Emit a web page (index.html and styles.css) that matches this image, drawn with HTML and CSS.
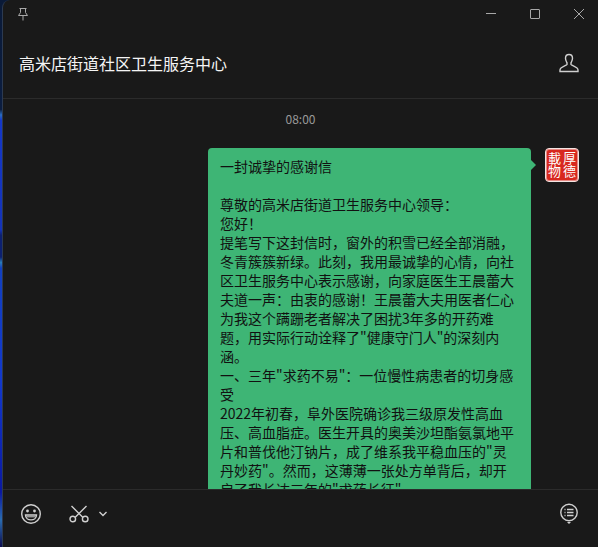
FILE: index.html
```html
<!DOCTYPE html>
<html lang="zh-CN">
<head>
  <meta charset="UTF-8" />
  <meta name="viewport" content="width=device-width, initial-scale=1.0"/>
  <title>高米店街道社区卫生服务中心</title>
  <link rel="stylesheet" href="styles.css">
</head>
<body>
  <div class="window">
    <div class="titlebar">
      <button class="pin-btn" aria-label="置顶">
        <svg width="12" height="14" viewBox="0 0 12 14"><path d="M2.5 1.5h7M3.5 1.5v4L1.500 8.500h9L8.500 5.500v-4M6 8.500V13.500"/></svg>
      </button>
      <div class="window-controls">
        <button aria-label="最小化">
          <svg width="12" height="12" viewBox="0 0 12 12"><path d="M1 5.5h10"/></svg>
        </button>
        <button aria-label="最大化">
          <svg width="12" height="12" viewBox="0 0 12 12"><rect x="1.5" y="1.5" width="9" height="9" rx="0.5"/></svg>
        </button>
        <button aria-label="关闭">
          <svg width="12" height="12" viewBox="0 0 12 12"><path d="M1 1l10 10M11 1L1 11"/></svg>
        </button>
      </div>
    </div>

    <header class="chat-header">
      <h1>高米店街道社区卫生服务中心</h1>
      <button aria-label="聊天信息">
        <svg width="20" height="20" viewBox="0 0 20 20"><path d="M10 1.500C7.800 1.500 6.500 3 6.500 5.200C6.500 7.500 7.300 8.500 8 9.700V11.500C7.500 12.800 1 13.800 1 17V18.500H19V17C19 13.800 12.500 12.800 12 11.500V9.700C12.700 8.500 13.500 7.500 13.500 5.200C13.500 3 12.200 1.500 10 1.500Z"/></svg>
      </button>
    </header>

    <main class="messages">
      <time class="time">08:00</time>
      <div class="message">
        <div class="bubble">
          <p>一封诚挚的感谢信</p>
          <br>
          <p>尊敬的高米店街道卫生服务中心领导：</p>
          <p>您好！</p>
          <p>提笔写下这封信时，窗外的积雪已经全部消融，冬青簇簇新绿。此刻，我用最诚挚的心情，向社区卫生服务中心表示感谢，向家庭医生王晨蕾大夫道一声：由衷的感谢！王晨蕾大夫用医者仁心为我这个蹒跚老者解决了困扰3年多的开药难题，用实际行动诠释了"健康守门人"的深刻内涵。</p>
          <p>一、三年"求药不易"：一位慢性病患者的切身感受</p>
          <p>2022年初春，阜外医院确诊我三级原发性高血压、高血脂症。医生开具的奥美沙坦酯氨氯地平片和普伐他汀钠片，成了维系我平稳血压的"灵丹妙药"。然而，这薄薄一张处方单背后，却开启了我长达三年的"求药长征"</p>
        </div>
        <div class="avatar"><span>厚德</span><span>載物</span></div>
      </div>
    </main>

    <footer class="toolbar">
      <button aria-label="表情">
        <svg width="22" height="22" viewBox="0 0 22 22"><circle cx="11" cy="11" r="9.300"/><circle class="solid" cx="7.500" cy="8" r="1.400"/><circle class="solid" cx="14.500" cy="8" r="1.400"/><path d="M5.500 12h11c0 6.500-11 6.500-11 0z"/><path class="thin" d="M6.500 13.800h9"/></svg>
      </button>
      <button class="cut-btn" aria-label="截图">
        <svg width="20" height="20" viewBox="0 0 20 20"><path d="M2.500 2l11.500 11.500M17.500 2L6 13.500"/><circle cx="3.800" cy="15" r="2.800"/><circle cx="16.200" cy="15" r="2.800"/></svg>
      </button>
      <button class="more-btn" aria-label="更多截图选项">
        <svg width="10" height="8" viewBox="0 0 10 8"><path d="M1.500 2L5 5.500L8.500 2"/></svg>
      </button>
      <button class="history-btn" aria-label="聊天记录">
        <svg width="20" height="22" viewBox="0 0 20 22"><circle cx="10" cy="9.500" r="8.200"/><path d="M5.500 6.500h1M8 6.500h6.500M5.500 9.500h1M8 9.500h6.500M5.500 12.500h1M8 12.500h6.500"/><path class="solid" d="M8 19h4L10 21z"/></svg>
      </button>
    </footer>
  </div>
</body>
</html>
```

FILE: styles.css
```css
* {
  box-sizing: border-box;
}

body {
  margin: 0;
  height: 100vh;
  padding-left: 2px;
  font-family: "Noto Sans CJK SC", sans-serif;
  background: linear-gradient(#0a1a38 0%, #0b1d40 20%, #2a6cc0 21%, #1437c8 22%, #1433b8 42%, #0c2070 43%, #0c2070 47%, #2a7cb8 48%, #1240c0 49%, #1238cc 70%, #0a18a0 90%, #2a6cb0 95%, #0c0c50 100%);
  overflow: hidden;
}

.window {
  display: flex;
  flex-direction: column;
  height: 100%;
  background: #191919;
  border-left: 1px solid #2c3a50;
  border-radius: 8px 0 0 0;
}

button {
  display: flex;
  padding: 0;
  border: none;
  background: none;
  color: #d0d0d0;
  cursor: pointer;
}

svg {
  fill: none;
  stroke: currentColor;
  stroke-width: 1.4;
}

svg .solid {
  fill: currentColor;
  stroke: none;
}

svg .thin {
  stroke-width: 1;
}

.titlebar {
  display: flex;
  justify-content: space-between;
  align-items: center;
  height: 28px;
  padding: 0 13px 0 14px;
}

.titlebar button {
  color: #a8a8a8;
}

.titlebar svg {
  stroke-width: 1;
}

.window-controls {
  display: flex;
  gap: 32px;
}

.chat-header {
  display: flex;
  justify-content: space-between;
  align-items: center;
  height: 71px;
  padding: 0 19px 0 16px;
  border-bottom: 1px solid #2b2b2b;
}

h1 {
  margin: 0;
  font-size: 16px;
  font-weight: 400;
  line-height: 24px;
  color: #f5f5f5;
}

.messages {
  flex: 1;
  min-height: 0;
  overflow: hidden;
}

.time {
  display: block;
  padding: 11px 0 12px;
  font-size: 12px;
  line-height: 18px;
  text-align: center;
  color: #999;
}

.message {
  display: flex;
  justify-content: flex-end;
  align-items: flex-start;
  gap: 14px;
  padding: 8px 19px 0 60px;
}

.bubble {
  position: relative;
  max-width: 323px;
  padding: 9px 12px;
  border-radius: 4px;
  background: #3eb575;
  color: #111;
  font-size: 14px;
  line-height: 19px;
}

.bubble::after {
  content: "";
  position: absolute;
  top: 12px;
  left: 100%;
  border: 5px solid transparent;
  border-left-color: #3eb575;
  border-right: none;
}

.bubble p {
  margin: 0;
}

/* red seal, read top to bottom from the right */
.avatar {
  flex: none;
  display: flex;
  flex-direction: column;
  justify-content: space-between;
  width: 34px;
  height: 34px;
  padding: 3px 2px;
  border: 1px solid #f3e4e2;
  border-radius: 4px;
  background: #d8281e;
  box-shadow: inset 0 0 0 1px #e88a84;
  color: #fff;
  font-size: 13px;
  line-height: 13px;
  writing-mode: vertical-rl;
}

.toolbar {
  display: flex;
  align-items: center;
  height: 58px;
  padding: 0 19px 9px 17px;
  border-top: 1px solid #2b2b2b;
}

.cut-btn {
  margin-left: 27px;
}

.more-btn {
  margin-left: 9px;
}

.history-btn {
  margin-left: auto;
}
```
